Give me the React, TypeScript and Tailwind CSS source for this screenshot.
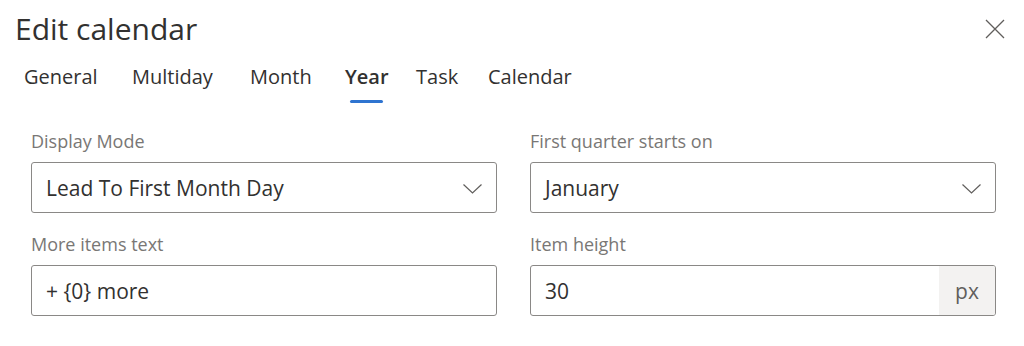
import React from "react";

const font = { fontFamily: '"Open Sans", "Noto Sans", sans-serif' };

function Chevron() {
  return (
    <svg width="19" height="10" viewBox="0 0 19 10" fill="none">
      <path d="M0.5 0.5 L9.5 9 L18.5 0.5" stroke="#605e5c" strokeWidth="1.2" />
    </svg>
  );
}

function Dropdown({ value }: { value: string }) {
  return (
    <div className="flex h-[51px] items-center justify-between rounded-[3px] border border-[#8a8886] bg-white pl-[14px] pr-[14px] pt-[2px]">
      <span className="text-[21px] text-[#323130]">{value}</span>
      <Chevron />
    </div>
  );
}

function Label({ children }: { children: React.ReactNode }) {
  return <div className="h-[22px] text-[18px] leading-[22px] text-[#797775]">{children}</div>;
}

function Tab({ label, active, width }: { label: string; active?: boolean; width: string }) {
  return (
    <div className={width}>
      <div className="inline-flex flex-col items-center">
        <span
          className={
            active
              ? "text-[20px] leading-[28px] font-semibold text-[#323130]"
              : "text-[20px] leading-[28px] text-[#323130]"
          }
        >
          {label}
        </span>
        <span
          className={
            active
              ? "mt-[9px] h-[3px] w-[33px] rounded-full bg-[#2f74d0]"
              : "mt-[9px] h-[3px] w-[33px] bg-transparent"
          }
        />
      </div>
    </div>
  );
}

export default function App() {
  return (
    <div className="h-[346px] w-[1024px] bg-white" style={font}>
      <div className="flex items-start justify-between pl-[15px] pr-[19px] pt-[10px]">
        <div className="text-[30px] leading-[38px] text-[#323130]">Edit calendar</div>
        <button className="mt-[9px] flex h-[20px] w-[20px] items-center justify-center">
          <svg width="20" height="20" viewBox="0 0 20 20" fill="none">
            <path d="M1 1 L19 19 M19 1 L1 19" stroke="#605e5c" strokeWidth="1.3" />
          </svg>
        </button>
      </div>
      <div className="mt-[15px] flex pl-[24px]">
        <Tab label="General" width="w-[108px]" />
        <Tab label="Multiday" width="w-[118px]" />
        <Tab label="Month" width="w-[95px]" />
        <Tab label="Year" active width="w-[71px]" />
        <Tab label="Task" width="w-[72px]" />
        <Tab label="Calendar" width="w-auto" />
      </div>
      <div className="mt-[27px] grid grid-cols-2 gap-x-[33px] gap-y-[20px] pl-[31px] pr-[28px]">
        <div className="flex flex-col gap-[10px]">
          <Label>Display Mode</Label>
          <Dropdown value="Lead To First Month Day" />
        </div>
        <div className="flex flex-col gap-[10px]">
          <Label>First quarter starts on</Label>
          <Dropdown value="January" />
        </div>
        <div className="flex flex-col gap-[10px]">
          <Label>More items text</Label>
          <div className="flex h-[51px] items-center rounded-[3px] border border-[#8a8886] bg-white pl-[14px] pt-[2px]">
            <span className="text-[21px] text-[#323130]">+ {"{0}"} more</span>
          </div>
        </div>
        <div className="flex flex-col gap-[10px]">
          <Label>Item height</Label>
          <div className="flex h-[51px] items-stretch overflow-hidden rounded-[3px] border border-[#8a8886] bg-white">
            <div className="flex flex-1 items-center pl-[14px] pt-[2px]">
              <span className="text-[21px] text-[#323130]">30</span>
            </div>
            <div className="flex w-[56px] items-center justify-center bg-[#f3f2f1] pt-[2px]">
              <span className="text-[21px] text-[#605e5c]">px</span>
            </div>
          </div>
        </div>
      </div>
    </div>
  );
}
